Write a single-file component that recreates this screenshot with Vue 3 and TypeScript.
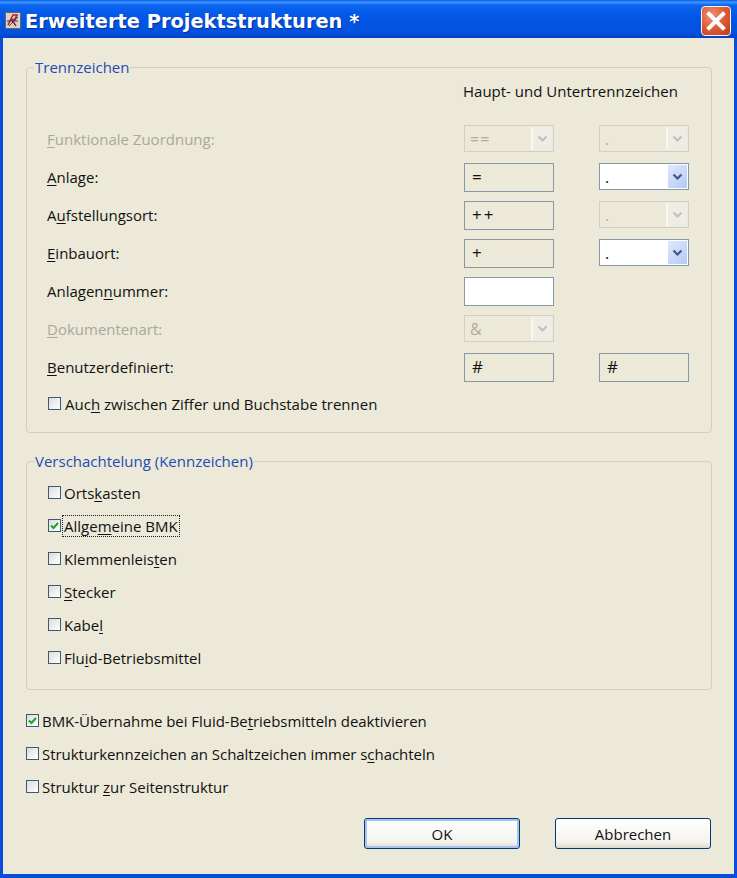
<script setup lang="ts">
interface Part {
  pre: string;
  key: string;
  post: string;
}
interface Field {
  kind: "select" | "input";
  value: string;
  disabled?: boolean;
  blank?: boolean;
}
interface Row {
  label: Part;
  disabled?: boolean;
  main: Field;
  sub?: Field;
}
interface Check {
  label: Part;
  checked?: boolean;
  focus?: boolean;
}

const p = (pre: string, key: string, post: string): Part => ({ pre, key, post });

const rows: Row[] = [
  {
    label: p("", "F", "unktionale Zuordnung:"),
    disabled: true,
    main: { kind: "select", value: "==", disabled: true },
    sub: { kind: "select", value: ".", disabled: true },
  },
  {
    label: p("", "A", "nlage:"),
    main: { kind: "input", value: "=" },
    sub: { kind: "select", value: "." },
  },
  {
    label: p("A", "u", "fstellungsort:"),
    main: { kind: "input", value: "++" },
    sub: { kind: "select", value: ".", disabled: true },
  },
  {
    label: p("", "E", "inbauort:"),
    main: { kind: "input", value: "+" },
    sub: { kind: "select", value: "." },
  },
  {
    label: p("Anlagen", "n", "ummer:"),
    main: { kind: "input", value: "", blank: true },
  },
  {
    label: p("", "D", "okumentenart:"),
    disabled: true,
    main: { kind: "select", value: "&", disabled: true },
  },
  {
    label: p("", "B", "enutzerdefiniert:"),
    main: { kind: "input", value: "#" },
    sub: { kind: "input", value: "#" },
  },
];

const nesting: Check[] = [
  { label: p("Orts", "k", "asten") },
  { label: p("Allge", "m", "eine BMK"), checked: true, focus: true },
  { label: p("Klemmenleis", "t", "en") },
  { label: p("", "S", "tecker") },
  { label: p("Kabe", "l", "") },
  { label: p("Flu", "i", "d-Betriebsmittel") },
];

const options: Check[] = [
  { label: p("BMK-Übernahme bei Fluid-Be", "t", "riebsmitteln deaktivieren"), checked: true },
  { label: p("Strukturkennzeichen an Schaltzeichen immer s", "c", "hachteln") },
  { label: p("Struktur ", "z", "ur Seitenstruktur") },
];
</script>

<template>
  <div class="window">
    <header class="titlebar">
      <svg class="app-icon" width="16" height="17" viewBox="0 0 16 17">
        <rect x="0.5" y="0.5" width="15" height="16" fill="#d8d4cc" stroke="#6b6560" />
        <path d="M3 13 L8 3 L12 3 L10 7 L6 8 M7 8 L11 14" fill="none" stroke="#b5202a" stroke-width="1.6" />
        <path d="M2 9 L13 9 M4 14 L13 5" fill="none" stroke="#2b2b2b" stroke-width="0.9" />
      </svg>
      <span class="title">Erweiterte Projektstrukturen *</span>
      <button class="close" aria-label="Schließen">
        <svg width="20" height="20" viewBox="0 0 20 20">
          <path d="M3 3 L17 17 M17 3 L3 17" stroke="#fff" stroke-width="4" stroke-linecap="square" />
        </svg>
      </button>
    </header>

    <main class="body">
      <fieldset class="group">
        <legend>Trennzeichen</legend>
        <div class="col-title">Haupt- und Untertrennzeichen</div>
        <div v-for="row in rows" :key="row.label.post" class="row">
          <span class="label" :class="{ off: row.disabled }">{{ row.label.pre }}<u>{{ row.label.key }}</u>{{ row.label.post }}</span>
          <template v-for="(f, i) in [row.main, row.sub]" :key="i">
            <div v-if="f && f.kind === 'input'" class="input" :class="{ blank: f.blank }">{{ f.value }}</div>
            <div v-else-if="f" class="select" :class="{ off: f.disabled }">
              <span class="select-value">{{ f.value }}</span>
              <span class="arrow">
                <svg width="11" height="8" viewBox="0 0 11 8">
                  <path d="M1.5 1.5 L5.5 5.5 L9.5 1.5" fill="none" stroke-width="2.2" />
                </svg>
              </span>
            </div>
            <div v-else></div>
          </template>
        </div>
        <label class="check check-last">
          <span class="box"></span>
          <span class="check-text plain">Auc<u>h</u> zwischen Ziffer und Buchstabe trennen</span>
        </label>
      </fieldset>

      <fieldset class="group group-nest">
        <legend>Verschachtelung (Kennzeichen)</legend>
        <label v-for="c in nesting" :key="c.label.post" class="check">
          <span class="box" :class="{ on: c.checked }">
            <svg v-if="c.checked" width="11" height="11" viewBox="0 0 11 11">
              <path d="M2 5.5 L4.5 8 L9 3" fill="none" stroke="#21a121" stroke-width="2" />
            </svg>
          </span>
          <span class="check-text" :class="{ focus: c.focus }">{{ c.label.pre }}<u>{{ c.label.key }}</u>{{ c.label.post }}</span>
        </label>
      </fieldset>

      <div class="options">
        <label v-for="c in options" :key="c.label.post" class="check">
          <span class="box" :class="{ on: c.checked }">
            <svg v-if="c.checked" width="11" height="11" viewBox="0 0 11 11">
              <path d="M2 5.5 L4.5 8 L9 3" fill="none" stroke="#21a121" stroke-width="2" />
            </svg>
          </span>
          <span class="check-text tight">{{ c.label.pre }}<u>{{ c.label.key }}</u>{{ c.label.post }}</span>
        </label>
      </div>

      <footer class="actions">
        <button class="btn default">OK</button>
        <button class="btn">Abbrechen</button>
      </footer>
    </main>
  </div>
</template>

<style scoped>
.window {
  width: 737px;
  height: 878px;
  display: flex;
  flex-direction: column;
  box-sizing: border-box;
  background: #0a4ddb;
  font-family: "Open Sans", "Liberation Sans", sans-serif;
  font-size: 15px;
  color: #111;
  overflow: hidden;
}
.titlebar {
  height: 38px;
  flex: none;
  display: flex;
  align-items: center;
  padding: 0 6px 0 5px;
  box-sizing: border-box;
  background: linear-gradient(180deg, #0a5ce6 0%, #3d95ff 6%, #0a63ee 14%, #0255e6 50%, #0252de 85%, #0143c4 100%);
}
.app-icon {
  flex: none;
  margin-top: 3px;
}
.title {
  flex: 1;
  margin-left: 4px;
  margin-top: 4px;
  font-family: "DejaVu Sans", sans-serif;
  font-weight: 700;
  font-size: 19.4px;
  color: #fff;
  text-shadow: 1px 1px 1px #0a2f9c;
  white-space: nowrap;
}
.close {
  width: 30px;
  height: 30px;
  margin-top: 3px;
  padding: 0;
  display: flex;
  align-items: center;
  justify-content: center;
  border: 1px solid #f4f4f4;
  border-radius: 4px;
  background: radial-gradient(circle at 35% 30%, #ec9270 0%, #dc5c36 50%, #c23a14 100%);
}
.body {
  flex: 1;
  margin: 0 3px 4px;
  padding: 19px 22px 0 23px;
  background: #ece9d8;
  display: flex;
  flex-direction: column;
}
.group {
  margin: 0;
  padding: 0 20px 0 20px;
  border: 1px solid #d0d0bf;
  border-radius: 4px;
  min-width: 0;
}
.group legend {
  margin-left: -13px;
  padding: 0 1px;
  height: 20px;
  line-height: 20px;
  color: #1f4bb5;
}
.group-nest {
  margin-top: 18px;
  padding-bottom: 15px;
}
.group-nest .check:first-of-type {
  margin-top: 5px;
}
.col-title {
  height: 43px;
  padding-left: 416px;
  line-height: 28px;
  white-space: nowrap;
}
.row {
  height: 38px;
  display: grid;
  grid-template-columns: 372px 90px 90px;
  column-gap: 45px;
  align-items: start;
}
.label {
  line-height: 38px;
}
.label u,
.check-text u {
  text-underline-offset: 2px;
}
.label.off {
  color: #a9a89b;
}
.input,
.select {
  margin-top: 5px;
  box-sizing: border-box;
  border: 1px solid #8899a6;
}
.input {
  height: 29px;
  line-height: 26px;
  padding-left: 7px;
  font-size: 17px;
  letter-spacing: 2px;
}
.input.blank {
  background: #fff;
}
.select {
  height: 27px;
  display: flex;
  align-items: stretch;
  background: #fff;
  padding: 1px;
}
.select-value {
  flex: 1;
  padding-left: 4px;
  line-height: 25px;
  font-size: 16px;
  letter-spacing: 1px;
}
.arrow {
  width: 19px;
  display: flex;
  align-items: center;
  justify-content: center;
  background: linear-gradient(135deg, #e0e9fd, #b4c8f6);
}
.arrow path {
  stroke: #44577f;
}
.select.off {
  background: #ece9d8;
  border-color: #d3d0c0;
  color: #aeada0;
}
.select.off .arrow {
  background: #eeede5;
  border-left: 2px solid #f8f7f2;
}
.select.off .arrow path {
  stroke: #c2c1b6;
}
.check {
  height: 33px;
  display: flex;
  align-items: center;
  white-space: nowrap;
}
.group .check {
  padding-left: 1px;
}
.check-last {
  height: 34px;
  margin-bottom: 12px;
}
.box {
  flex: none;
  width: 13px;
  height: 13px;
  box-sizing: border-box;
  border: 1px solid #3b5a75;
  display: flex;
  align-items: center;
  justify-content: center;
  background: linear-gradient(135deg, #dcdcd7, #fff);
}
.check-text {
  margin-left: 1px;
  line-height: 20px;
  padding: 0 1px;
  border: 1px dotted transparent;
  margin-top: 1px;
}
.check-text.tight {
  margin-left: 1px;
  letter-spacing: -0.04px;
}
.check-text.plain {
  margin-left: 2px;
}
.check-text.focus {
  border-color: #222;
}
.options {
  margin-top: 14px;
}
.actions {
  margin-top: 15px;
  display: flex;
  justify-content: flex-end;
  gap: 35px;
  padding-right: 1px;
}
.btn {
  width: 156px;
  height: 31px;
  padding: 0;
  border: 1px solid #003c74;
  border-radius: 3px;
  background: linear-gradient(180deg, #fff 0%, #f4f3ee 80%, #dcd8cc 100%);
  font: inherit;
  color: #111;
}
.btn.default {
  box-shadow: inset 0 0 0 2px #a9c4ec;
}
</style>

<style>
html,
body {
  margin: 0;
  background: #ece9d8;
}
</style>
